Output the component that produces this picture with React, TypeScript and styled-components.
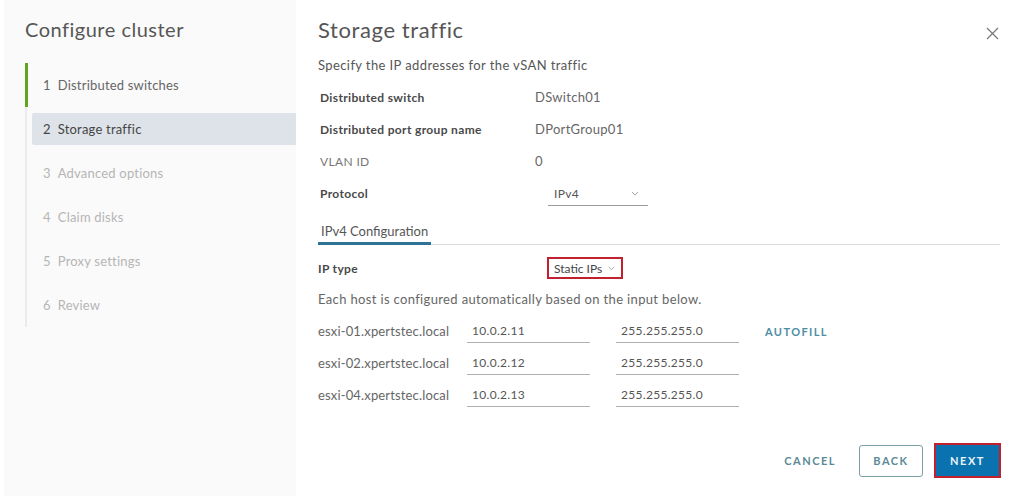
import React from "react";
import styled, { createGlobalStyle } from "styled-components";

const Global = createGlobalStyle`
  html, body { margin: 0; padding: 0; background: #ffffff; }
  body { font-family: Lato, "Noto Sans", sans-serif; color: #565656; }
  * { box-sizing: border-box; }
`;

const Page = styled.div`
  display: flex;
  width: 1024px;
  height: 496px;
  overflow: hidden;
  background: #fff;
`;

const Sidebar = styled.aside`
  width: 292px;
  margin-left: 4px;
  background: #fafafa;
  padding-top: 14px;
  display: flex;
  flex-direction: column;
`;

const SideTitle = styled.h1`
  margin: 0 0 19px 21px;
  font-size: 20px;
  line-height: 30px;
  font-weight: 400;
  color: #565656;
  letter-spacing: 0.5px;
`;

const Steps = styled.ol`
  list-style: none;
  margin: 0 0 0 21px;
  padding: 0;
`;

const Step = styled.li<{ $done?: boolean }>`
  height: 44px;
  display: flex;
  align-items: center;
  border-left: ${(p) => (p.$done ? "3px solid #62a420" : "2px solid #ebebeb")};
  padding: 6px 0 6px ${(p) => (p.$done ? "4px" : "5px")};
`;

const StepInner = styled.div<{ $active?: boolean; $disabled?: boolean }>`
  flex: 1;
  height: 32px;
  display: flex;
  align-items: center;
  padding-left: 11px;
  font-size: 13px;
  letter-spacing: 0.2px;
  border-radius: 2px 0 0 2px;
  background: ${(p) => (p.$active ? "#dde3e8" : "transparent")};
  color: ${(p) => (p.$active ? "#454545" : p.$disabled ? "#b5b5b5" : "#666")};
`;

const StepNum = styled.span`
  margin-right: 7px;
`;

const Main = styled.main`
  flex: 1;
  padding: 15px 23px 18px 22px;
  display: flex;
  flex-direction: column;
`;

const Header = styled.div`
  display: flex;
  align-items: center;
  justify-content: space-between;
  height: 30px;
`;

const Title = styled.h2`
  margin: 0;
  font-size: 22px;
  line-height: 30px;
  font-weight: 400;
  color: #565656;
  letter-spacing: 0.6px;
`;

const CloseButton = styled.button`
  border: none;
  background: none;
  padding: 0;
  width: 16px;
  height: 16px;
  margin-top: 7px;
  margin-right: 1px;
  display: flex;
  align-items: center;
  justify-content: center;
  cursor: pointer;
`;

const Subtitle = styled.p`
  margin: 10px 0 6px;
  font-size: 13px;
  line-height: 20px;
  letter-spacing: 0.4px;
  color: #565656;
`;

const FormRow = styled.div<{ $h?: number }>`
  display: flex;
  align-items: center;
  height: ${(p) => p.$h ?? 32}px;
`;

const Label = styled.div<{ $bold?: boolean; $indent?: number }>`
  width: ${(p) => 219 - (p.$indent ?? 2)}px;
  padding-left: ${(p) => p.$indent ?? 2}px;
  font-size: 12px;
  letter-spacing: 0.35px;
  font-weight: ${(p) => (p.$bold ? 700 : 400)};
  color: ${(p) => (p.$bold ? "#4a4a4a" : "#777")};
`;

const Value = styled.div`
  font-size: 13px;
  letter-spacing: 0.3px;
  color: #666;
`;

const Select = styled.div`
  margin-left: 13px;
  width: 100px;
  height: 26px;
  display: flex;
  align-items: center;
  justify-content: space-between;
  padding: 2px 9px 0 6px;
  border-bottom: 1px solid #9a9a9a;
  font-size: 12px;
  letter-spacing: 0.3px;
  color: #565656;
`;

const TabBar = styled.div`
  display: flex;
  margin-top: 8px;
  border-bottom: 1px solid #dcdcdc;
  width: 682px;
`;

const Tab = styled.div`
  padding: 4px 3px 1px 3px;
  font-size: 13px;
  line-height: 20px;
  color: #565656;
  border-bottom: 3px solid #2c7396;
  margin-bottom: -1px;
`;

const IpSelect = styled.div`
  margin-left: 10px;
  height: 22px;
  display: flex;
  align-items: center;
  gap: 6px;
  padding: 0 6px 0 5px;
  border: 2px solid #c2202e;
  font-size: 12px;
  color: #454545;
`;

const Help = styled.p`
  margin: 5px 0 6px;
  font-size: 13px;
  line-height: 20px;
  letter-spacing: 0.35px;
  color: #666;
`;

const HostRow = styled.div`
  display: flex;
  align-items: center;
  height: 32px;
`;

const HostName = styled.div`
  width: 149px;
  font-size: 13px;
  letter-spacing: 0.15px;
  color: #666;
`;

const Input = styled.div<{ $gap?: number }>`
  width: 123px;
  height: 24px;
  margin-right: ${(p) => p.$gap ?? 26}px;
  padding: 4px 0 0 5px;
  border-bottom: 1px solid #b0b0b0;
  font-size: 12px;
  letter-spacing: 0.3px;
  color: #565656;
`;

const LinkButton = styled.button`
  border: none;
  background: none;
  padding: 0;
  font-family: inherit;
  font-size: 11px;
  font-weight: 700;
  letter-spacing: 1.4px;
  color: #4d8ea3;
  cursor: pointer;
`;

const Footer = styled.div`
  margin-top: auto;
  display: flex;
  align-items: center;
  justify-content: flex-end;
  gap: 11px;
`;

const Btn = styled.button<{ $variant: "flat" | "outline" | "primary" }>`
  font-family: inherit;
  font-size: 11px;
  font-weight: 700;
  letter-spacing: 1.5px;
  cursor: pointer;
  height: ${(p) => (p.$variant === "primary" ? 35 : 32)}px;
  padding: 0 12px;
  border-radius: 3px;
  ${(p) =>
    p.$variant === "flat"
      ? "background: none; border: none; color: #5a8a96; margin-right: 0;"
      : p.$variant === "outline"
      ? "background: #fff; border: 1px solid #7a9fa7; color: #5a8a96; width: 64px;"
      : "background: #0b72b0; border: 2px solid #c2202e; color: #eaf4fa; width: 67px; border-radius: 0;"}
`;

const Chevron = ({ size = 8 }: { size?: number }) => (
  <svg width={size} height={size / 2 + 1} viewBox="0 0 10 6" fill="none">
    <path d="M1 1l4 4 4-4" stroke="#8a8a8a" strokeWidth="1" />
  </svg>
);

const steps = [
  "Distributed switches",
  "Storage traffic",
  "Advanced options",
  "Claim disks",
  "Proxy settings",
  "Review",
];

const hosts = [
  ["esxi-01.xpertstec.local", "10.0.2.11"],
  ["esxi-02.xpertstec.local", "10.0.2.12"],
  ["esxi-04.xpertstec.local", "10.0.2.13"],
];

export default function App() {
  return (
    <>
      <Global />
      <Page>
        <Sidebar>
          <SideTitle>Configure cluster</SideTitle>
          <Steps>
            {steps.map((s, i) => (
              <Step key={s} $done={i === 0}>
                <StepInner $active={i === 1} $disabled={i > 1}>
                  <StepNum>{i + 1}</StepNum>
                  {s}
                </StepInner>
              </Step>
            ))}
          </Steps>
        </Sidebar>
        <Main>
          <Header>
            <Title>Storage traffic</Title>
            <CloseButton aria-label="Close">
              <svg width="13" height="13" viewBox="0 0 13 13">
                <path d="M1 1l11 11M12 1L1 12" stroke="#7a7a7a" strokeWidth="1.3" />
              </svg>
            </CloseButton>
          </Header>
          <Subtitle>Specify the IP addresses for the vSAN traffic</Subtitle>
          <FormRow>
            <Label $bold>Distributed switch</Label>
            <Value>DSwitch01</Value>
          </FormRow>
          <FormRow>
            <Label $bold>Distributed port group name</Label>
            <Value>DPortGroup01</Value>
          </FormRow>
          <FormRow>
            <Label>VLAN ID</Label>
            <Value>0</Value>
          </FormRow>
          <FormRow>
            <Label $bold>Protocol</Label>
            <Select>
              <span>IPv4</span>
              <Chevron />
            </Select>
          </FormRow>
          <TabBar>
            <Tab>IPv4 Configuration</Tab>
          </TabBar>
          <FormRow style={{ marginTop: 7 }}>
            <Label $bold $indent={0}>IP type</Label>
            <IpSelect>
              <span>Static IPs</span>
              <Chevron size={7} />
            </IpSelect>
          </FormRow>
          <Help>Each host is configured automatically based on the input below.</Help>
          {hosts.map(([h, ip], i) => (
            <HostRow key={h}>
              <HostName>{h}</HostName>
              <Input>{ip}</Input>
              <Input>255.255.255.0</Input>
              {i === 0 && <LinkButton>AUTOFILL</LinkButton>}
            </HostRow>
          ))}
          <Footer>
            <Btn $variant="flat">CANCEL</Btn>
            <Btn $variant="outline">BACK</Btn>
            <Btn $variant="primary">NEXT</Btn>
          </Footer>
        </Main>
      </Page>
    </>
  );
}
